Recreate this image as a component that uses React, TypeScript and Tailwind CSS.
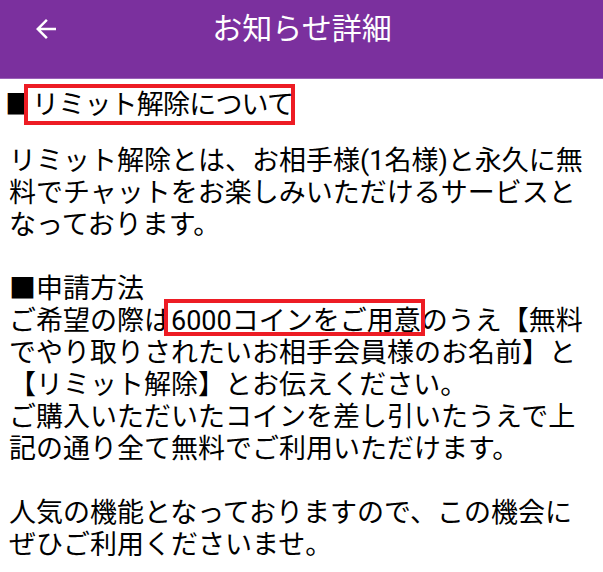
import React from "react";

function Marked({
  children,
  left,
  right,
  top,
  bottom,
}: {
  children: React.ReactNode;
  left: string;
  right: string;
  top: string;
  bottom: string;
}) {
  return (
    <span className="relative">
      <span className={`absolute border-4 border-[#ED1C24] bg-white ${left} ${right} ${top} ${bottom}`} />
      <span className="relative">{children}</span>
    </span>
  );
}

export default function App() {
  return (
    <div
      className="w-[603px] h-[572px] bg-white overflow-hidden text-black"
      style={{ fontFamily: 'Roboto, "Noto Sans CJK JP", sans-serif' }}
    >
      <header className="h-[79px] bg-[#7B309E] border-b border-[#9A62B8] relative">
        <div className="h-[58px] flex items-center justify-center">
          <span className="text-white text-[30px] leading-none pl-[1px]">お知らせ詳細</span>
        </div>
        <button className="absolute left-[31px] top-[14px] w-[30px] h-[30px] flex items-center justify-center">
          <svg viewBox="0 0 24 24" width="30" height="30" fill="white">
            <path d="M20 11H7.83l5.59-5.59L12 4l-8 8 8 8 1.41-1.41L7.83 13H20v-2z" />
          </svg>
        </button>
      </header>
      <main className="px-[9px] pt-[10px] text-[27px] leading-[32px]">
        <p className="-ml-[4px]">
          ■
          <Marked left="-left-[8px]" right="-right-[2px]" top="-top-[5px]" bottom="-bottom-[4px]">
            <span className="tracking-[-0.8px]">リミット解除について</span>
          </Marked>
        </p>
        <p className="mt-[24px]">
          リミット解除とは、お相手様(1名様)と永久に無料でチャットをお楽しみいただけるサービスとなっております。
        </p>
        <p className="mt-[32px]">■申請方法</p>
        <p>
          ご希望の際は
          <Marked left="-left-[7px]" right="-right-[4px]" top="-top-[6px]" bottom="bottom-[1px]">
            6000コインをご用意
          </Marked>
          のうえ【無料でやり取りされたいお相手会員様のお名前】と
          <br />
          【リミット解除】とお伝えください。
          <br />
          ご購入いただいたコインを差し引いたうえで上記の通り全て無料でご利用いただけます。
        </p>
        <p className="mt-[32px]">
          人気の機能となっておりますので、この機会にぜひご利用くださいませ。
        </p>
      </main>
    </div>
  );
}
